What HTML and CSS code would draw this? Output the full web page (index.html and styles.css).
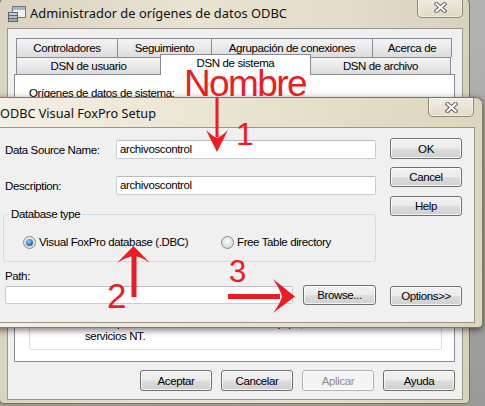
FILE: index.html
```html
<!DOCTYPE html>
<html lang="es">
<head>
<meta charset="utf-8">
<title>ODBC</title>
<link rel="stylesheet" href="styles.css">
</head>
<body>
<div class="desktop">
  <section class="win admin">
    <header class="titlebar">
      <svg class="appicon" width="18" height="17" viewBox="0 0 18 17">
        <rect x="4.5" y="1.5" width="13" height="11" fill="#eef2f6" stroke="#6d7780"/>
        <rect x="5" y="2" width="12" height="3" fill="#9fb6cc"/>
        <rect x="0.5" y="7.5" width="9" height="3" fill="#c9cdd1" stroke="#5e666d"/>
        <rect x="0.5" y="10.5" width="9" height="3" fill="#b7bcc1" stroke="#5e666d"/>
        <rect x="0.5" y="13.5" width="9" height="3" fill="#a6acb2" stroke="#5e666d"/>
      </svg>
      <span class="title">Administrador de orígenes de datos ODBC</span>
      <span class="close">
        <svg width="13" height="11" viewBox="0 0 13 11"><path d="M2.5 2 L10.5 9 M10.5 2 L2.5 9" stroke="#6b6b6b" stroke-width="4.2" stroke-linecap="square"/><path d="M2.5 2 L10.5 9 M10.5 2 L2.5 9" stroke="#ffffff" stroke-width="2" stroke-linecap="square"/></svg>
      </span>
    </header>
    <div class="client">
      <div class="tabrow row1">
        <div class="tab t-ctrl">Controladores</div>
        <div class="tab t-seg">Seguimiento</div>
        <div class="tab t-agr">Agrupación de conexiones</div>
        <div class="tab t-acer last">Acerca de</div>
      </div>
      <div class="tabrow row2">
        <div class="tab t-usu">DSN de usuario</div>
        <div class="tab t-sis sel">DSN de sistema</div>
        <div class="tab t-arc last">DSN de archivo</div>
      </div>
      <div class="panel">
        <div class="plabel">Orígenes de datos de sistema:</div>
        <div class="infobox">
          <p>visible para todos los usuarios de este equipo, incluidos los<br>servicios NT.</p>
        </div>
      </div>
      <div class="actions">
        <span class="btn">Aceptar</span>
        <span class="btn">Cancelar</span>
        <span class="btn disabled">Aplicar</span>
        <span class="btn">Ayuda</span>
      </div>
    </div>
  </section>

  <section class="win setup">
    <header class="titlebar stitle">
      <span class="title">ODBC Visual FoxPro Setup</span>
      <span class="close">
        <svg width="13" height="11" viewBox="0 0 13 11"><path d="M2.5 2 L10.5 9 M10.5 2 L2.5 9" stroke="#6b6b6b" stroke-width="4.2" stroke-linecap="square"/><path d="M2.5 2 L10.5 9 M10.5 2 L2.5 9" stroke="#ffffff" stroke-width="2" stroke-linecap="square"/></svg>
      </span>
    </header>
    <div class="client sclient">
      <div class="leftcol">
        <div class="frow r1"><span class="flabel">Data Source Name:</span><span class="field">archivoscontrol</span></div>
        <div class="frow r2"><span class="flabel">Description:</span><span class="field">archivoscontrol</span></div>
        <fieldset class="group">
          <legend>Database type</legend>
          <div class="radios">
            <label class="ritem first"><span class="radio on"></span>Visual FoxPro database (.DBC)</label>
            <label class="ritem"><span class="radio"></span>Free Table directory</label>
          </div>
        </fieldset>
        <div class="pathlabel">Path:</div>
        <div class="pathrow"><span class="field path"></span><span class="btn browse">Browse...</span></div>
      </div>
      <div class="rightcol">
        <span class="btn ok">OK</span>
        <span class="btn cancel">Cancel</span>
        <span class="btn help">Help</span>
        <span class="btn options">Options&gt;&gt;</span>
      </div>
    </div>
  </section>

  <svg class="annot" width="485" height="406" viewBox="0 0 485 406">
    <g fill="#ed1c24" font-family="Liberation Sans, Arial, sans-serif">
      <text x="184" y="96" font-size="37" letter-spacing="-1.6">Nombre</text>
      <text x="236" y="145" font-size="32">1</text>
      <text x="107" y="308" font-size="35">2</text>
      <text x="229" y="282" font-size="31">3</text>
    </g>
    <g fill="#ed1c24" stroke="none">
      <rect x="215.5" y="98" width="3" height="39"/>
      <path d="M217 152 L206 130 Q212 136 217 138 Q222 136 228 130 Z"/>
      <rect x="131.5" y="255" width="5" height="42"/>
      <path d="M133.5 246 L117 263 Q126 257 134 256 Q142 257 150 263 Z"/>
      <rect x="228" y="294" width="52" height="5"/>
      <path d="M295 296.5 L273 279 Q280 289 282 296.5 Q280 304 273 313 Z"/>
    </g>
  </svg>
</div>
</body>
</html>
```

FILE: styles.css
```css
html, body {
  margin: 0;
  padding: 0;
}
body {
  width: 485px;
  height: 406px;
  overflow: hidden;
  font-family: "Liberation Sans", Arial, sans-serif;
  font-size: 11.5px;
  letter-spacing: -0.38px;
  color: #000;
}
.desktop {
  position: relative;
  width: 485px;
  height: 406px;
  overflow: hidden;
  background: linear-gradient(#b3b3b3, #9a9a9a);
}
.win {
  position: absolute;
  box-sizing: border-box;
  display: flex;
  flex-direction: column;
  border: 1px solid rgba(70, 62, 40, 0.65);
  border-radius: 7px 7px 5px 5px;
}
.admin {
  left: -1px;
  top: -3px;
  width: 471px;
  height: 407px;
  padding: 0 6px 3px 7px;
  background: linear-gradient(90deg, #d9d3bf 0%, #e8e3d2 40%, #e2dcc8 75%, #d8d1bc 100%);
}
.setup {
  left: -10px;
  top: 97px;
  width: 493px;
  height: 231px;
  padding: 0 7px 4px 7px;
  background: linear-gradient(90deg, #f3f0e6 0%, #ece7d6 35%, #e4dec9 70%, #ddd6bf 100%);
  box-shadow: 0 2px 7px rgba(0, 0, 0, 0.55);
}
.titlebar {
  display: flex;
  align-items: center;
  height: 30px;
  flex: none;
}
.admin .titlebar {
  padding-left: 1px;
}
.stitle {
  height: 29px;
  padding-left: 2px;
}
.appicon {
  margin-right: 4px;
  margin-top: 1px;
}
.title {
  font-family: "Noto Sans", "Open Sans", sans-serif;
  font-size: 12.9px;
  letter-spacing: 0;
  color: #111;
  white-space: nowrap;
}
.stitle .title {
  font-size: 12.7px;
}
.close {
  margin-left: auto;
  align-self: flex-start;
  box-sizing: border-box;
  width: 46px;
  height: 20px;
  margin-top: 0;
  border: 1px solid rgba(80, 72, 50, 0.6);
  border-top: none;
  border-radius: 0 0 5px 5px;
  background: linear-gradient(rgba(255, 255, 255, 0.55), rgba(232, 226, 208, 0.4));
  box-shadow: inset 0 0 0 1px rgba(255, 255, 255, 0.45);
  display: flex;
  align-items: center;
  justify-content: center;
}
.stitle .close {
  height: 19px;
  margin-right: 1px;
}
.client {
  flex: 1;
  box-sizing: border-box;
  background: #f0f0f0;
  border: 1px solid #9a968a;
  display: flex;
  flex-direction: column;
}

/* tabs */
.tabrow {
  display: flex;
  margin-left: 8px;
  align-items: flex-start;
}
.row1 {
  margin-top: 9px;
  height: 19px;
}
.row2 {
  height: 17px;
}
.tab {
  box-sizing: border-box;
  border: 1px solid #898c95;
  border-right: none;
  border-bottom: none;
  background: linear-gradient(#f4f4f4, #e9e9e9 50%, #dcdcdc);
  text-align: center;
  white-space: nowrap;
}
.tab.last {
  border-right: 1px solid #898c95;
}
.row1 .tab {
  height: 19px;
  line-height: 18px;
}
.row2 .tab {
  height: 17px;
  line-height: 16px;
}
.t-ctrl { width: 101px; }
.t-seg { width: 94px; }
.t-agr { width: 161px; }
.t-acer { width: 80px; }
.t-usu { width: 144px; }
.t-sis { width: 151px; }
.t-arc { width: 141px; border-left: 1px solid #898c95; }
.row2 .tab.sel {
  position: relative;
  z-index: 2;
  margin-top: -3px;
  height: 21px;
  line-height: 16px;
  background: #fff;
  border-right: 1px solid #898c95;
  margin-right: -1px;
}
.panel {
  box-sizing: border-box;
  height: 288px;
  margin: 0 7px 0 6px;
  border: 1px solid #898c95;
  background: #fff;
  display: flex;
  flex-direction: column;
}
.plabel {
  margin: 11px 0 0 14px;
  line-height: 14px;
}
.infobox {
  margin: auto 12px 11px 14px;
  height: 60px;
  box-sizing: border-box;
  border: 1px solid #d9dde2;
  border-radius: 3px;
  display: flex;
  align-items: flex-end;
}
.infobox p {
  margin: 0 0 6px 55px;
  line-height: 13px;
}
.actions {
  display: flex;
  justify-content: flex-end;
  gap: 9px;
  margin: 8px 7px 0 0;
}

/* buttons */
.btn {
  box-sizing: border-box;
  width: 72px;
  height: 21px;
  border: 1px solid #707070;
  border-radius: 3px;
  background: linear-gradient(#f2f2f2 0%, #ebebeb 48%, #dddddd 52%, #cfcfcf 100%);
  box-shadow: inset 0 0 0 1px rgba(255, 255, 255, 0.75);
  display: flex;
  align-items: center;
  justify-content: center;
  white-space: nowrap;
}
.btn.disabled {
  border-color: #adb2b5;
  background: #f4f4f4;
  color: #8d8d8d;
}

/* setup dialog */
.sclient {
  flex-direction: row;
}
.leftcol {
  width: 373px;
  margin-left: 4px;
  display: flex;
  flex-direction: column;
}
.frow {
  display: flex;
  align-items: center;
  height: 19px;
}
.r1 { margin-top: 12px; }
.r2 { margin-top: 17px; }
.flabel {
  width: 111px;
  padding-left: 2px;
  flex: none;
}
.field {
  box-sizing: border-box;
  width: 260px;
  height: 19px;
  border: 1px solid #c9ccd2;
  border-top-color: #b9bcc3;
  border-radius: 2px;
  background: #fff;
  padding-left: 3px;
  line-height: 17px;
  flex: none;
}
.group {
  margin: 12px 0 0 0;
  padding: 0;
  border: 1px solid #d5dbe0;
  border-radius: 3px;
  min-width: 0;
}
.group legend {
  margin-left: 5px;
  padding: 0 2px;
  line-height: 14px;
}
.radios {
  display: flex;
  align-items: center;
  height: 14px;
  margin: 14px 0 12px 19px;
}
.ritem {
  display: flex;
  align-items: center;
  gap: 3px;
}
.ritem.first {
  width: 198px;
}
.radio {
  position: relative;
  box-sizing: border-box;
  width: 13px;
  height: 13px;
  border-radius: 50%;
  border: 1px solid #8b8b8b;
  background: radial-gradient(circle at 50% 40%, #fbfbfb, #dadada 70%, #c6c6c6);
  flex: none;
}
.radio.on::after {
  content: "";
  position: absolute;
  left: 2px;
  top: 2px;
  width: 7px;
  height: 7px;
  border-radius: 50%;
  background: radial-gradient(circle at 40% 35%, #9ed3f5, #2a6fb4 60%, #163f6e);
}
.pathlabel {
  margin-top: 7px;
  padding-left: 2px;
  line-height: 14px;
}
.pathrow {
  display: flex;
  align-items: center;
  height: 20px;
  margin-top: 2px;
}
.field.path {
  width: 288px;
  height: 18px;
  margin-left: 2px;
}
.btn.browse {
  width: 73px;
  height: 20px;
  margin-left: 10px;
}
.rightcol {
  width: 72px;
  margin-left: 14px;
  display: flex;
  flex-direction: column;
}
.btn.ok { margin-top: 10px; }
.btn.cancel { margin-top: 8px; height: 20px; }
.btn.help { margin-top: 9px; height: 20px; }
.btn.options { margin-top: 70px; height: 20px; }

.annot {
  position: absolute;
  left: 0;
  top: 0;
  z-index: 10;
  pointer-events: none;
}
```
